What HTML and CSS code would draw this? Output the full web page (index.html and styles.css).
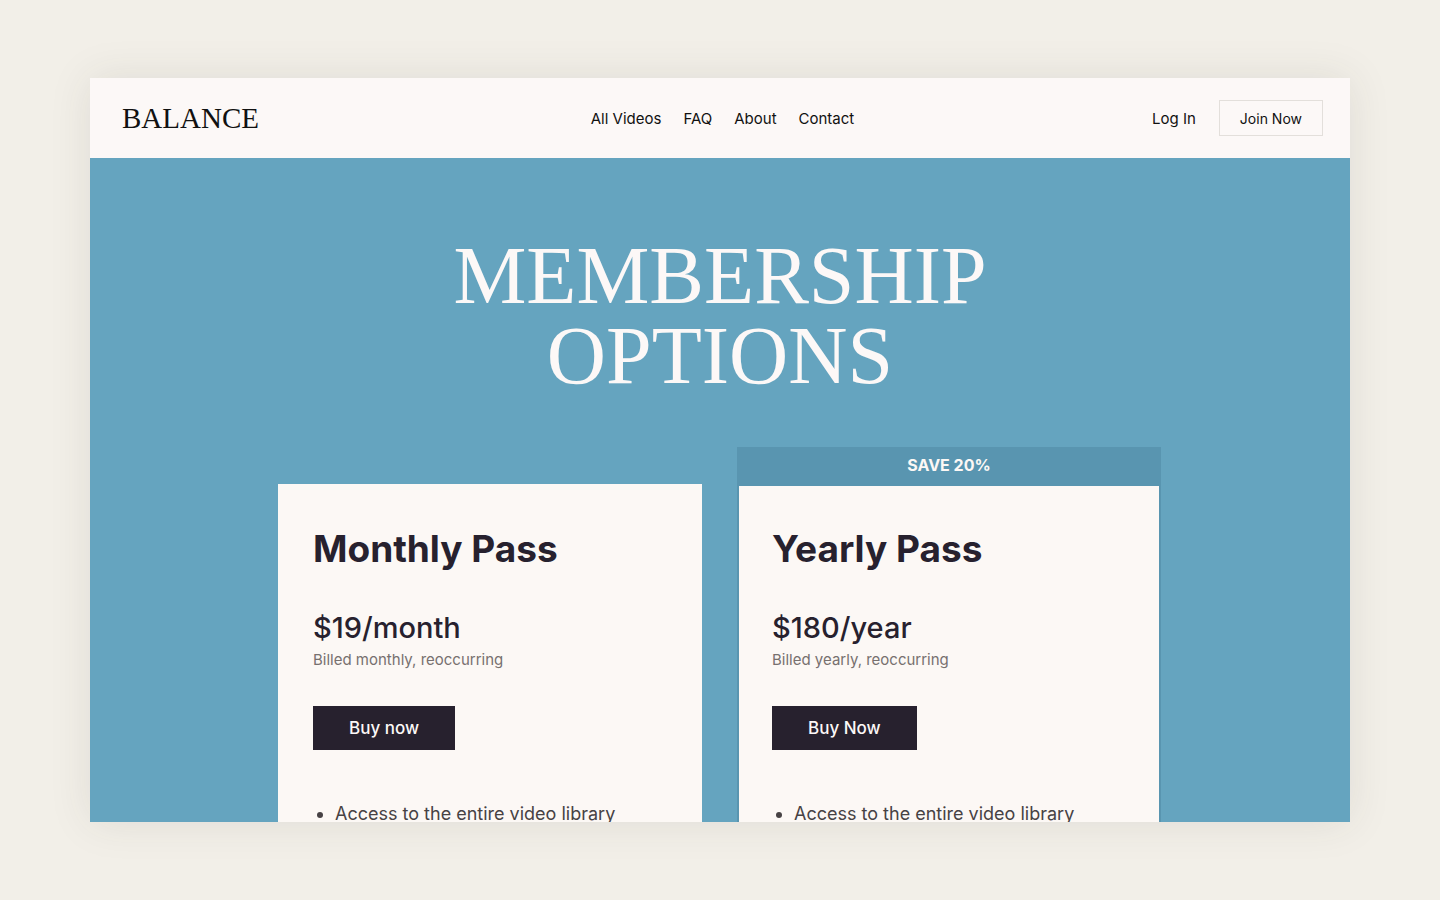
FILE: index.html
```html
<!DOCTYPE html>
<html lang="en">
<head>
    <meta charset="UTF-8">
    <meta name="viewport" content="width=device-width, initial-scale=1.0">
    <title>Balance - Membership Options</title>
    <link rel="stylesheet" href="styles.css">
</head>
<body>
    <div class="site">
        <header class="header">
            <a href="#" class="logo">BALANCE</a>
            <nav class="nav">
                <a href="#">All Videos</a>
                <a href="#">FAQ</a>
                <a href="#">About</a>
                <a href="#">Contact</a>
            </nav>
            <div class="account">
                <a href="#">Log In</a>
                <button type="button" class="join-button">Join Now</button>
            </div>
        </header>

        <main class="membership">
            <h1>MEMBERSHIP<br>OPTIONS</h1>

            <div class="plans">
                <section class="plan">
                    <div class="plan-body">
                        <h2>Monthly Pass</h2>
                        <p class="price">$19/month</p>
                        <p class="billing">Billed monthly, reoccurring</p>
                        <button type="button" class="buy-button">Buy now</button>
                        <ul>
                            <li>Access to the entire video library</li>
                        </ul>
                    </div>
                </section>

                <section class="plan plan-featured">
                    <p class="badge">SAVE 20%</p>
                    <div class="plan-body">
                        <h2>Yearly Pass</h2>
                        <p class="price">$180/year</p>
                        <p class="billing">Billed yearly, reoccurring</p>
                        <button type="button" class="buy-button">Buy Now</button>
                        <ul>
                            <li>Access to the entire video library</li>
                        </ul>
                    </div>
                </section>
            </div>
        </main>
    </div>
</body>
</html>
```

FILE: styles.css
```css
* {
    box-sizing: border-box;
}

body {
    margin: 0;
    height: 100vh;
    padding: 78px 90px;
    background-color: #f2efe8;
    font-family: Inter, "Liberation Sans", sans-serif;
    color: #27212e;
}

h1, h2, p, ul {
    margin: 0;
}

a {
    color: inherit;
    text-decoration: none;
}

button {
    font-family: inherit;
    cursor: pointer;
}

.site {
    display: flex;
    flex-direction: column;
    height: 100%;
    overflow: hidden;
    box-shadow: 0 0 40px rgba(60, 60, 50, 0.1);
}

/* header */
.header {
    display: grid;
    grid-template-columns: 1fr auto 1fr;
    align-items: center;
    flex-shrink: 0;
    height: 80px;
    padding: 0 27px 0 32px;
    background-color: #fcf8f7;
    color: #111;
    font-size: 15px;
}

.logo {
    font-family: "Liberation Serif", serif;
    font-size: 29px;
}

.nav {
    display: flex;
    gap: 22px;
}

.account {
    display: flex;
    justify-content: flex-end;
    align-items: center;
    gap: 23px;
}

.join-button {
    height: 36px;
    padding: 0 20px;
    border: 1px solid #e3dfdb;
    background: none;
    color: #111;
    font-size: 14px;
}

/* membership */
.membership {
    flex: 1;
    min-height: 0;
    padding-top: 78px;
    background-color: #65a4bf;
}

h1 {
    color: #fcf8f7;
    font-family: "Liberation Serif", serif;
    font-size: 82px;
    font-weight: 400;
    line-height: 80px;
    text-align: center;
}

.plans {
    display: grid;
    grid-template-columns: repeat(2, minmax(0, 424px));
    align-items: end;
    gap: 35px;
    max-width: 884px;
    margin: 51px auto 0;
}

.plan-body {
    padding: 41px 33px 36px;
    border: 2px solid #fcf8f5;
    background-color: #fcf8f5;
}

.plan-featured .plan-body {
    border-color: #5995b0;
}

.badge {
    background-color: #5995b0;
    color: #fcf8f5;
    font-size: 16px;
    font-weight: 700;
    line-height: 37px;
    text-align: center;
}

h2 {
    font-size: 37px;
    font-weight: 700;
    line-height: 44px;
}

.price {
    margin-top: 39px;
    font-size: 29px;
    font-weight: 500;
    line-height: 36px;
}

.billing {
    margin-top: 4px;
    color: #77706f;
    font-size: 15px;
    line-height: 20px;
}

.buy-button {
    height: 44px;
    margin-top: 36px;
    padding: 0 36px;
    border: none;
    background-color: #27212e;
    color: #fcf8f7;
    font-size: 17px;
    font-weight: 500;
}

.plan ul {
    margin-top: 51px;
    padding-left: 22px;
    color: #474244;
    font-size: 18px;
    line-height: 26px;
}
```
